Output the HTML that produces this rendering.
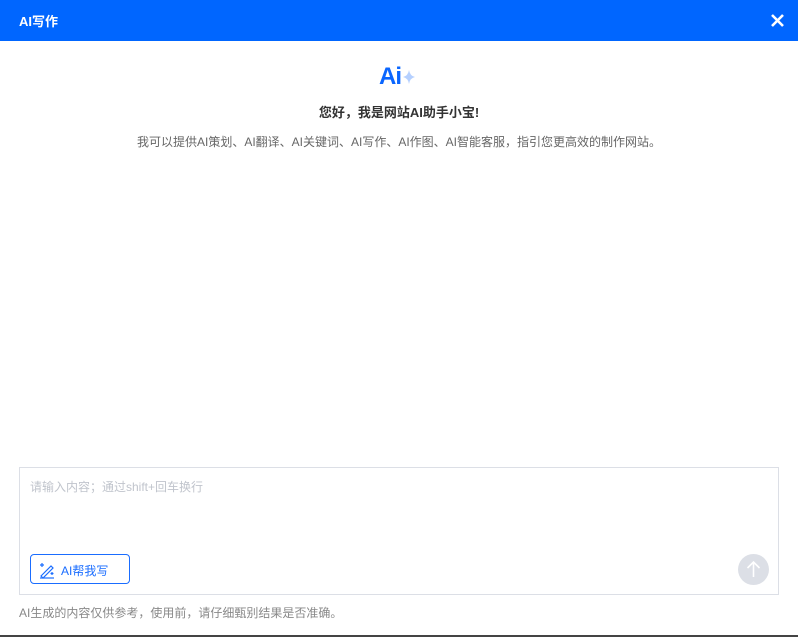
<!DOCTYPE html>
<html><head><meta charset="utf-8"><style>
*{margin:0;padding:0;box-sizing:border-box}
body{width:798px;height:637px;background:#fff;position:relative;overflow:hidden;font-family:"Liberation Sans","Noto Sans CJK SC",sans-serif}
.hd{position:absolute;left:0;top:0;width:798px;height:41px;background:#0066ff;color:#fff}
.hd .t{position:absolute;left:19px;top:11px;font-size:13px;font-weight:bold}
.hd .x{position:absolute;left:770px;top:13px}
.logo{position:absolute;left:379px;top:63px;font-size:24px;font-weight:bold;color:#0a66ff;letter-spacing:-1px}
.h1{position:absolute;left:0;width:798px;top:102px;text-align:center;font-size:13px;font-weight:bold;color:#333}
.sub{position:absolute;left:0;width:798px;top:133px;text-align:center;font-size:12px;color:#666}
.box{position:absolute;left:19px;top:467px;width:760px;height:128px;border:1px solid #dcdfe6}
.ph{position:absolute;left:10px;top:10px;font-size:12px;color:#c0c4cc}
.btn{position:absolute;left:10px;top:86px;width:100px;height:30px;border:1px solid #1a6dff;border-radius:4px;color:#1a6dff;font-size:12px}
.btn span{position:absolute;left:30px;top:7px}
.send{position:absolute;left:718px;top:86px;width:31px;height:31px;border-radius:50%;background:#dcdfe6}
.ft{position:absolute;left:19px;top:604px;font-size:12px;color:#888}
.bl{position:absolute;left:0;top:635px;width:798px;height:2px;background:#444}
</style></head><body>
<div class="hd"><div class="t">AI写作</div>
<svg class="x" width="15" height="15" viewBox="0 0 15 15"><path d="M2 2L13 13M13 2L2 13" stroke="#fff" stroke-width="2.6"/></svg></div>
<div class="logo">Ai<svg width="14" height="16" viewBox="0 0 14 16" style="vertical-align:-1px;margin-left:1px"><path d="M7 1Q8 7 13 8Q8 9 7 15Q6 9 1 8Q6 7 7 1Z" fill="#b5d0ff"/></svg></div>
<div class="h1">您好，我是网站AI助手小宝!</div>
<div class="sub">我可以提供AI策划、AI翻译、AI关键词、AI写作、AI作图、AI智能客服，指引您更高效的制作网站。</div>
<div class="box"><div class="ph">请输入内容；通过shift+回车换行</div>
<div class="btn"><svg style="position:absolute;left:7px;top:6px" width="18" height="18" viewBox="0 0 18 18" fill="none" stroke="#1a6dff" stroke-width="1.2"><path d="M3 15L13 5L15 7L5 17Z"/><path d="M2 17H16"/><path d="M4 2V6M2 4H6M14 11v3M12.5 12.5h3"/></svg><span>AI帮我写</span></div>
<div class="send"><svg width="31" height="31" viewBox="0 0 31 31" fill="none" stroke="#fff" stroke-width="1.6"><path d="M15.5 23V8M9.5 14L15.5 8L21.5 14"/></svg></div></div>
<div class="ft">AI生成的内容仅供参考，使用前，请仔细甄别结果是否准确。</div>
<div class="bl"></div>
</body></html>
